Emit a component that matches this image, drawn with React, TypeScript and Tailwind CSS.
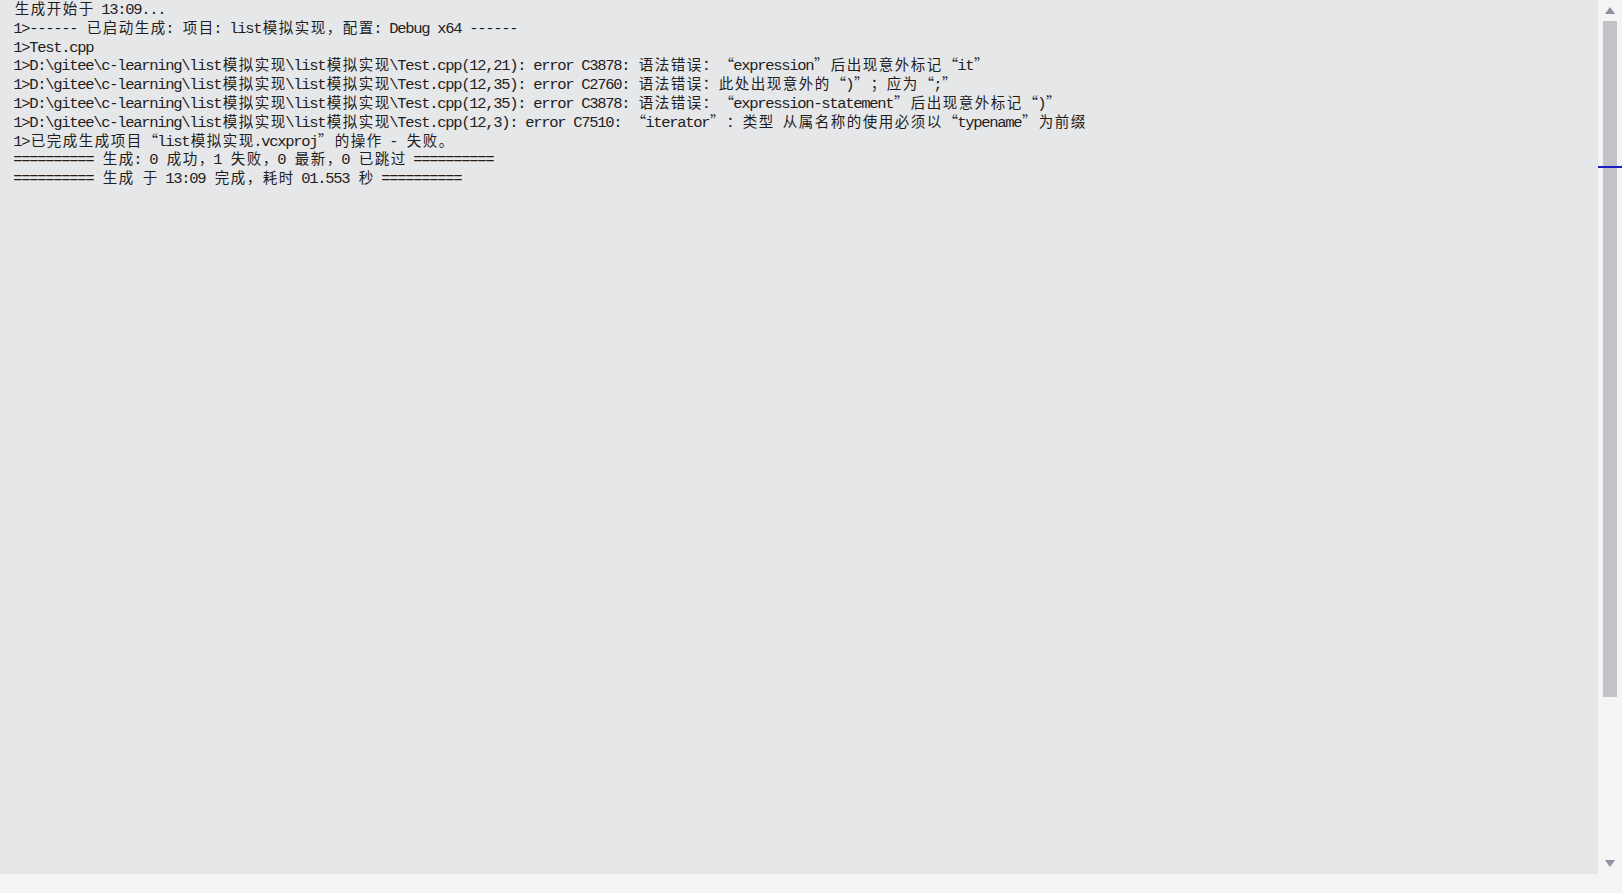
const LINES = [
  '生成开始于 13:09...',
  '1>------ 已启动生成: 项目: list模拟实现，配置: Debug x64 ------',
  '1>Test.cpp',
  '1>D:\\gitee\\c-learning\\list模拟实现\\list模拟实现\\Test.cpp(12,21): error C3878: 语法错误：“expression”后出现意外标记“it”',
  '1>D:\\gitee\\c-learning\\list模拟实现\\list模拟实现\\Test.cpp(12,35): error C2760: 语法错误：此处出现意外的“)”；应为“;”',
  '1>D:\\gitee\\c-learning\\list模拟实现\\list模拟实现\\Test.cpp(12,35): error C3878: 语法错误：“expression-statement”后出现意外标记“)”',
  '1>D:\\gitee\\c-learning\\list模拟实现\\list模拟实现\\Test.cpp(12,3): error C7510: “iterator”：类型 从属名称的使用必须以“typename”为前缀',
  '1>已完成生成项目“list模拟实现.vcxproj”的操作 - 失败。',
  '========== 生成: 0 成功，1 失败，0 最新，0 已跳过 ==========',
  '========== 生成 于 13:09 完成，耗时 01.553 秒 ==========',
];

// SimSun-style grid: half-width cell 8px, full-width cell 16px
function Cell({ ch }: { ch: string }) {
  if (ch === ' ') return <span className="inline-block w-[8px]" />;
  if (ch.charCodeAt(0) > 0x2000) {
    if (ch === '“') return <span className="inline-flex w-[16px] justify-end">{ch}</span>;
    if (ch === '”') return <span className="inline-flex w-[16px] justify-start">{ch}</span>;
    return <span className="inline-flex w-[16px] justify-center">{ch}</span>;
  }
  return (
    <span className="inline-flex w-[8px] justify-center font-['Liberation_Mono',monospace] text-[15.5px]">
      {ch}
    </span>
  );
}

function OutputLine({ text }: { text: string }) {
  return (
    <div className="h-[18.8px] leading-[18.8px] whitespace-pre font-['Noto_Sans_CJK_SC',sans-serif] text-[14.5px]">
      {Array.from(text).map((ch, i) => (
        <Cell key={i} ch={ch} />
      ))}
    </div>
  );
}

function ScrollBar() {
  return (
    <div className="relative w-[24px] flex flex-col items-center bg-[#f4f4f4]">
      <div className="h-[21px] flex items-center justify-center">
        <svg width="10" height="7" viewBox="0 0 10 7">
          <polygon points="5,0 10,7 0,7" fill="#8f90a1" />
        </svg>
      </div>
      <div className="w-[14px] h-[676px] bg-[#c2c3c9]" />
      <div className="flex-1" />
      <div className="h-[21px] flex items-center justify-center">
        <svg width="10" height="7" viewBox="0 0 10 7">
          <polygon points="0,0 10,0 5,7" fill="#8f90a1" />
        </svg>
      </div>
      {/* error marker */}
      <div className="absolute left-0 right-0 top-[166px] h-[2px] bg-[#1c1cc8]" />
    </div>
  );
}

export default function App() {
  return (
    <div className="w-[1622px] h-[893px] flex flex-col bg-[#f4f4f4] text-[#1e1e1e] overflow-hidden">
      <div className="flex h-[874px]">
        <div className="flex-1 bg-[#e6e7e9] pl-[14px]">
          <div className="-mt-px">
            {LINES.map((l, i) => (
              <OutputLine key={i} text={l} />
            ))}
          </div>
        </div>
        <ScrollBar />
      </div>
      <div className="flex-1" />
    </div>
  );
}
